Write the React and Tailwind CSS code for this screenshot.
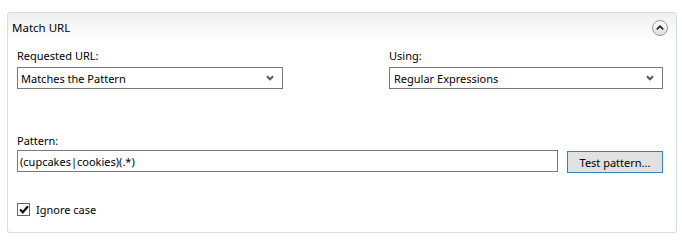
import React from 'react';

const font = { fontFamily: '"Noto Sans", "Liberation Sans", sans-serif' };

const Chevron = () => (
  <svg width="8" height="6" viewBox="0 0 8 6" className="shrink-0">
    <path d="M1 1.2 L4 4.4 L7 1.2" fill="none" stroke="#555" strokeWidth="2" />
  </svg>
);

const CollapseButton = () => (
  <svg width="18" height="18" viewBox="0 0 18 18">
    <defs>
      <linearGradient id="cb" x1="0" y1="0" x2="0" y2="1">
        <stop offset="0" stopColor="#ffffff" />
        <stop offset="1" stopColor="#dcdcdc" />
      </linearGradient>
    </defs>
    <circle cx="9" cy="9" r="7.5" fill="url(#cb)" stroke="#9a9a9a" strokeWidth="1" />
    <path d="M5.8 10.4 L9 7.2 L12.2 10.4" fill="none" stroke="#222" strokeWidth="1.7" />
  </svg>
);

const Select = ({ value, pl = 'pl-[3px]' }) => (
  <div className={`h-[22px] w-full border border-[#7a7a7a] bg-white flex items-center justify-between ${pl} pr-[8px]`}>
    <span className="text-[11px] text-black leading-none">{value}</span>
    <Chevron />
  </div>
);

export default function App() {
  return (
    <div className="w-[682px] h-[246px] bg-white pt-[12px] pl-[7px]" style={font}>
      <div className="w-[670px] h-[221px] border border-[#d6dce4] rounded-[3px] bg-white">
        {/* header */}
        <div className="h-[30px] flex items-center justify-between pl-[4px] pr-[7px] bg-gradient-to-b from-[#f0f0f0] to-white">
          <span className="text-[11.5px] text-black">Match URL</span>
          <CollapseButton />
        </div>

        <div className="pl-[9px] pr-[13px] pt-[5px]">
          {/* selects */}
          <div className="flex justify-between">
            <div className="w-[266px]">
              <div className="text-[11px] leading-[16px] text-black">Requested URL:</div>
              <div className="mt-[3px]">
                <Select value="Matches the Pattern" />
              </div>
            </div>
            <div className="w-[274px]">
              <div className="text-[11px] leading-[16px] text-black">Using:</div>
              <div className="mt-[3px]">
                <Select value="Regular Expressions" pl="pl-[4px]" />
              </div>
            </div>
          </div>

          {/* pattern */}
          <div className="mt-[44px]">
            <div className="text-[11px] leading-[16px] text-black">Pattern:</div>
            <div className="mt-[1px] flex items-start gap-[9px]">
              <div className="flex-1 h-[22px] border border-[#7a7a7a] bg-white flex items-center pl-[2px]">
                <span className="text-[11px] text-black leading-none">(cupcakes|cookies)(.*)</span>
              </div>
              <button className="mt-[1px] w-[96px] h-[22px] border border-[#3c7fb1] bg-[#e1e1e1] text-[11px] text-black leading-none flex items-center justify-center">
                Test pattern...
              </button>
            </div>
          </div>

          {/* ignore case */}
          <div className="mt-[30px] flex items-center gap-[6px]">
            <div className="w-[13px] h-[13px] border border-[#666] bg-white flex items-center justify-center">
              <svg width="10" height="9" viewBox="0 0 10 9">
                <path d="M1 4.5 L3.8 7.3 L9 1.2" fill="none" stroke="#111" strokeWidth="2.2" />
              </svg>
            </div>
            <span className="text-[11px] text-black leading-none">Ignore case</span>
          </div>
        </div>
      </div>
    </div>
  );
}
